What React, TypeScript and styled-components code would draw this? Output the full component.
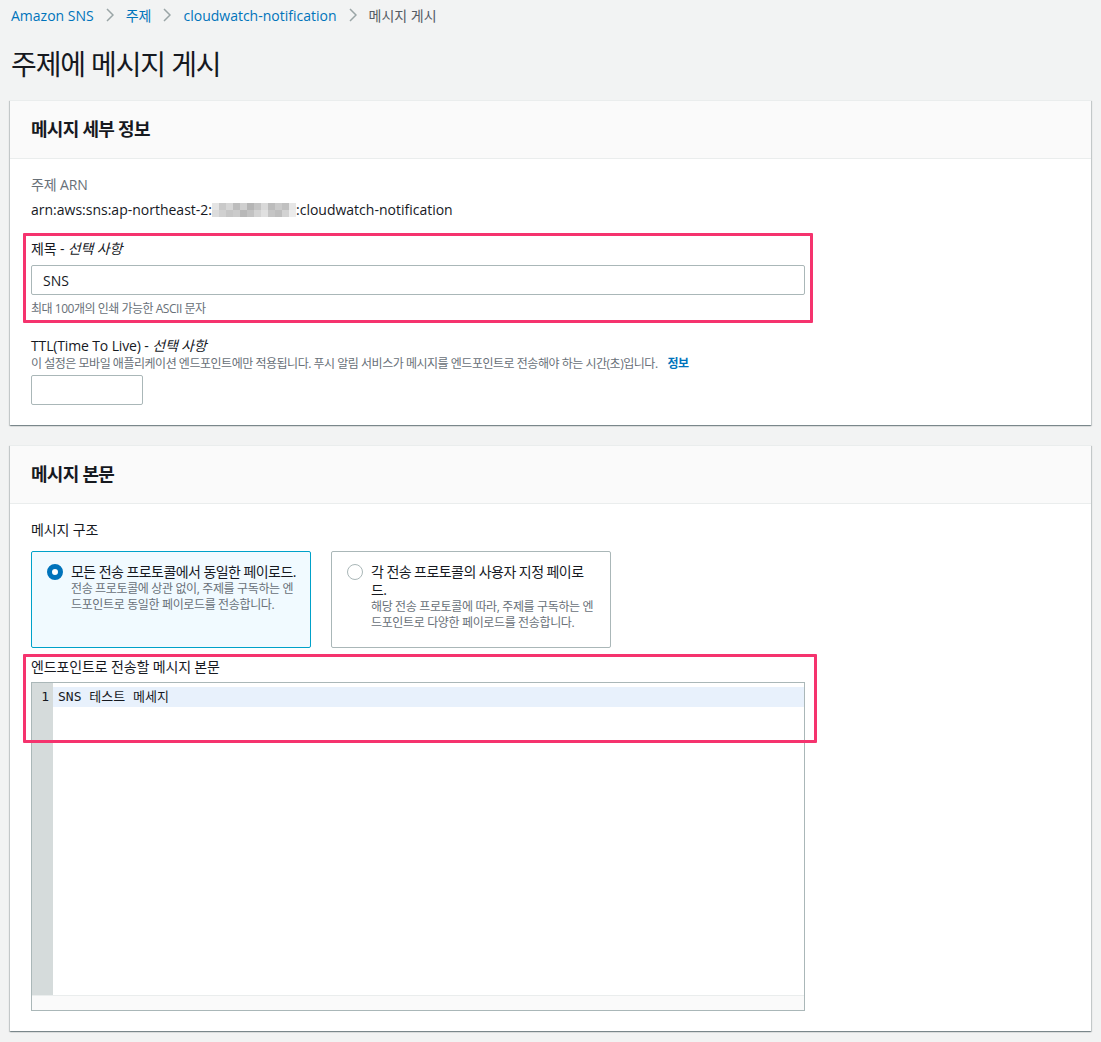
import styled, { createGlobalStyle } from "styled-components";

const GlobalStyle = createGlobalStyle`
  body {
    margin: 0;
    background-color: #f2f3f3;
    color: #16191f;
    font-family: "Open Sans", "Noto Sans CJK KR", sans-serif;
  }
  * {
    box-sizing: border-box;
  }
`;

const Page = styled.div`
  padding: 0 10px 10px 10px;
`;

const Breadcrumbs = styled.nav`
  display: flex;
  align-items: center;
  height: 30px;
  padding-left: 1px;
  font-size: 14px;
`;

const Crumb = styled.a<{ $current?: boolean }>`
  color: ${(p) => (p.$current ? "#545b64" : "#0073bb")};
  text-decoration: none;
`;

const Sep = styled.span`
  display: flex;
  align-items: center;
  margin: 0 12px;
  color: #9aa5a6;
`;

const Title = styled.h1`
  margin: 16px 0 18px 1px;
  font-size: 28px;
  font-weight: 400;
  line-height: 36px;
  letter-spacing: -0.04em;
`;

const Panel = styled.section`
  background-color: #ffffff;
  border-top: 1px solid #eaeded;
  box-shadow: 0 1px 1px 0 rgba(0, 28, 36, 0.3),
    1px 1px 1px 0 rgba(0, 28, 36, 0.15), -1px 1px 1px 0 rgba(0, 28, 36, 0.15);
  margin-bottom: 20px;
`;

const PanelHeader = styled.div`
  background-color: #fafafa;
  border-bottom: 1px solid #eaeded;
  padding: 18px 20px 19px 21px;
`;

const PanelTitle = styled.h2`
  margin: 0;
  font-size: 18px;
  font-weight: 700;
  line-height: 20px;
  letter-spacing: -0.04em;
`;

const PanelBody = styled.div`
  padding: 16px 20px 20px 21px;
`;

const Field = styled.div<{ $gap?: number }>`
  position: relative;
  max-width: 774px;
  margin-top: ${(p) => p.$gap ?? 0}px;
`;

const Label = styled.div<{ $muted?: boolean }>`
  font-size: 14px;
  line-height: 20px;
  letter-spacing: -0.01em;
  color: ${(p) => (p.$muted ? "#687078" : "#16191f")};
`;

const Optional = styled.i`
  font-style: italic;
`;

const Value = styled.div`
  display: flex;
  align-items: center;
  margin-top: 5px;
  font-size: 14px;
  line-height: 20px;
`;

const Description = styled.div`
  font-size: 12px;
  line-height: 16px;
  letter-spacing: -0.04em;
  color: #687078;
`;

const InfoLink = styled.a`
  margin-left: 10px;
  color: #0073bb;
  font-weight: 700;
  text-decoration: none;
`;

const Input = styled.input<{ $width?: number; $above?: number; $below?: number }>`
  display: block;
  width: ${(p) => (p.$width ? `${p.$width}px` : "100%")};
  height: 30px;
  margin: ${(p) => p.$above ?? 5}px 0 ${(p) => p.$below ?? 6}px 0;
  padding: 0 11px;
  border: 1px solid #aab7b8;
  border-radius: 2px;
  font-family: inherit;
  font-size: 14px;
  color: #16191f;
  background: #ffffff;
`;

const Marker = styled.div<{ $top: number; $right: number; $bottom?: number; $height?: number }>`
  position: absolute;
  top: ${(p) => p.$top}px;
  left: -8px;
  right: ${(p) => p.$right}px;
  ${(p) => (p.$height ? `height: ${p.$height}px;` : `bottom: ${p.$bottom}px;`)}
  border: 3px solid #f5336e;
  border-radius: 1px;
  pointer-events: none;
`;

const Tiles = styled.div`
  display: grid;
  grid-template-columns: 280px 280px;
  gap: 20px;
  margin-top: 11px;
`;

const Tile = styled.label<{ $selected?: boolean }>`
  display: flex;
  gap: 8px;
  padding: 11px 12px 16px 15px;
  border: 1px solid ${(p) => (p.$selected ? "#00a1c9" : "#aab7b8")};
  background-color: ${(p) => (p.$selected ? "#f1faff" : "#ffffff")};
  border-radius: 2px;
`;

const Radio = styled.span<{ $checked?: boolean }>`
  flex: none;
  width: 16px;
  height: 16px;
  margin-top: 1px;
  border-radius: 50%;
  background: #ffffff;
  border: ${(p) => (p.$checked ? "5px solid #0073bb" : "1px solid #aab7b8")};
`;

const TileText = styled.div`
  display: flex;
  flex-direction: column;
  word-break: break-all;
`;

const TileTitle = styled.span`
  font-size: 14px;
  line-height: 18px;
  letter-spacing: -0.04em;
`;

const TileDesc = styled.span`
  font-size: 12px;
  line-height: 16px;
  letter-spacing: -0.03em;
  color: #687078;
`;

const Editor = styled.div`
  display: flex;
  flex-direction: column;
  height: 329px;
  margin-top: 5px;
  border: 1px solid #aab7b8;
  background: #ffffff;
`;

const EditorBody = styled.div`
  flex: 1;
  display: flex;
`;

const Gutter = styled.div`
  width: 21px;
  padding: 4px 4px 0 0;
  background-color: #d5dbdb;
  text-align: right;
  font-family: "DejaVu Sans Mono", "Noto Sans CJK KR", monospace;
  font-size: 13px;
  line-height: 20px;
`;

const Lines = styled.div`
  flex: 1;
  padding-top: 4px;
`;

const CodeLine = styled.div<{ $active?: boolean }>`
  height: 20px;
  padding-left: 5px;
  background-color: ${(p) => (p.$active ? "#e8f1fc" : "transparent")};
  font-family: "DejaVu Sans Mono", "Noto Sans CJK KR", monospace;
  font-size: 13px;
  line-height: 20px;
  white-space: pre;
`;

const StatusBar = styled.div`
  height: 15px;
  border-top: 1px solid #eaeded;
  background-color: #fafafa;
`;

const Chevron = () => (
  <svg width="8" height="14" viewBox="0 0 8 14" fill="none">
    <path d="M1 1l6 6-6 6" stroke="currentColor" strokeWidth="1.5" />
  </svg>
);

const pixels = [
  "#e4e4e4", "#c9c9c9", "#d6d6d6", "#bdbdbd", "#cfcfcf", "#b5b5b5", "#c4c4c4",
  "#d9d9d9", "#bcbcbc", "#cacaca", "#c0c0c0", "#e6e6e6",
  "#dcdcdc", "#d0d0d0", "#c6c6c6", "#cbcbcb", "#b8b8b8", "#c2c2c2", "#d3d3d3",
  "#e0e0e0", "#c5c5c5", "#bebebe", "#d2d2d2", "#ececec",
];

const Pixelated = () => (
  <svg width="84" height="14" viewBox="0 0 84 14">
    {pixels.map((c, i) => (
      <rect key={i} x={(i % 12) * 7} y={Math.floor(i / 12) * 7} width="7" height="7" fill={c} />
    ))}
  </svg>
);

const App = () => {
  return (
    <Page>
      <GlobalStyle />
      <Breadcrumbs>
        <Crumb href="#">Amazon SNS</Crumb>
        <Sep><Chevron /></Sep>
        <Crumb href="#">주제</Crumb>
        <Sep><Chevron /></Sep>
        <Crumb href="#">cloudwatch-notification</Crumb>
        <Sep><Chevron /></Sep>
        <Crumb $current>메시지 게시</Crumb>
      </Breadcrumbs>
      <Title>주제에 메시지 게시</Title>

      <Panel>
        <PanelHeader>
          <PanelTitle>메시지 세부 정보</PanelTitle>
        </PanelHeader>
        <PanelBody>
          <Field>
            <Label $muted>주제 ARN</Label>
            <Value>
              arn:aws:sns:ap-northeast-2:
              <Pixelated />
              :cloudwatch-notification
            </Value>
          </Field>
          <Field $gap={19}>
            <Label>
              제목 - <Optional>선택 사항</Optional>
            </Label>
            <Input defaultValue="SNS" $above={6} />
            <Description>최대 100개의 인쇄 가능한 ASCII 문자</Description>
            <Marker $top={-6} $right={-8} $bottom={-6} />
          </Field>
          <Field $gap={19}>
            <Label>
              TTL(Time To Live) - <Optional>선택 사항</Optional>
            </Label>
            <Description>
              이 설정은 모바일 애플리케이션 엔드포인트에만 적용됩니다. 푸시 알림 서비스가 메시지를 엔드포인트로 전송해야 하는 시간(초)입니다.
              <InfoLink href="#">정보</InfoLink>
            </Description>
            <Input $width={112} $above={3} $below={0} />
          </Field>
        </PanelBody>
      </Panel>

      <Panel>
        <PanelHeader>
          <PanelTitle>메시지 본문</PanelTitle>
        </PanelHeader>
        <PanelBody>
          <Label>메시지 구조</Label>
          <Tiles>
            <Tile $selected>
              <Radio $checked />
              <TileText>
                <TileTitle>모든 전송 프로토콜에서 동일한 페이로드.</TileTitle>
                <TileDesc>전송 프로토콜에 상관 없이, 주제를 구독하는 엔드포인트로 동일한 페이로드를 전송합니다.</TileDesc>
              </TileText>
            </Tile>
            <Tile>
              <Radio />
              <TileText>
                <TileTitle>각 전송 프로토콜의 사용자 지정 페이로드.</TileTitle>
                <TileDesc>해당 전송 프로토콜에 따라, 주제를 구독하는 엔드포인트로 다양한 페이로드를 전송합니다.</TileDesc>
              </TileText>
            </Tile>
          </Tiles>
          <Field $gap={9}>
            <Label>엔드포인트로 전송할 메시지 본문</Label>
            <Editor>
              <EditorBody>
                <Gutter>1</Gutter>
                <Lines>
                  <CodeLine $active>SNS 테스트 메세지</CodeLine>
                </Lines>
              </EditorBody>
              <StatusBar />
            </Editor>
            <Marker $top={-3} $right={-12} $height={89} />
          </Field>
        </PanelBody>
      </Panel>
    </Page>
  );
};

export default App;
